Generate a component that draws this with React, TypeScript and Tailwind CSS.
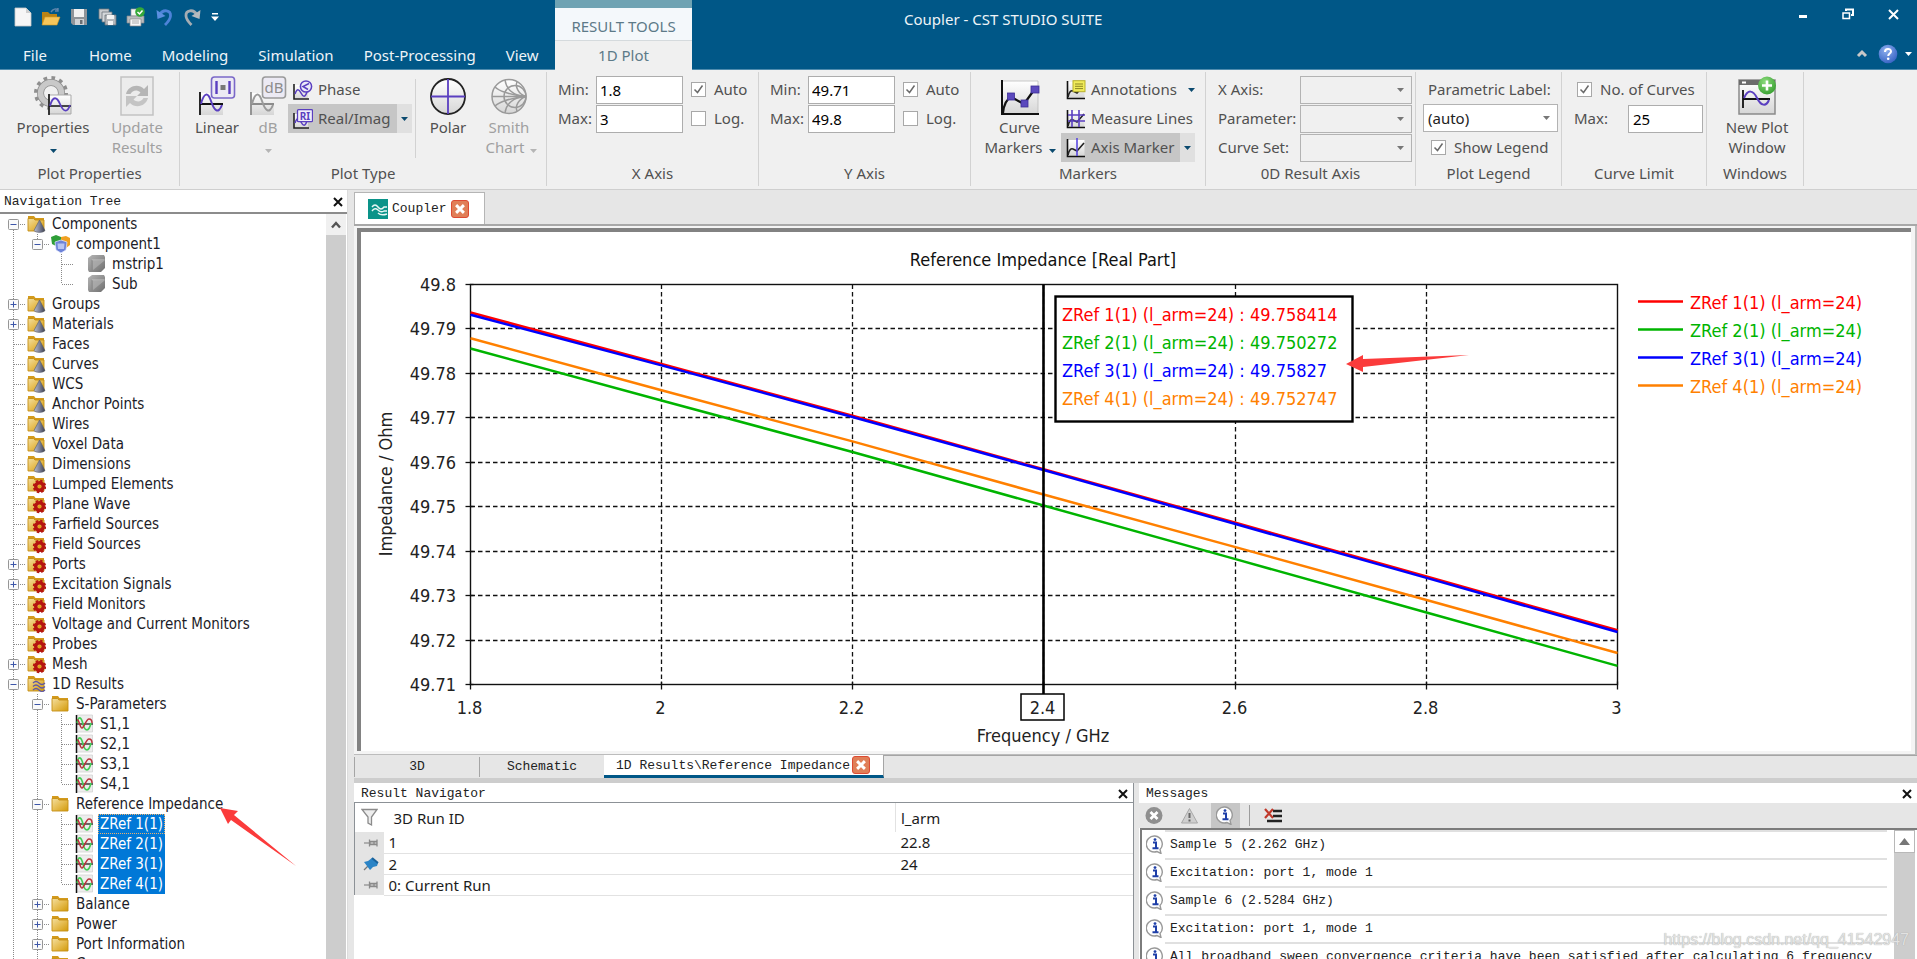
import React from "react";

/* ---------- shared pieces ---------- */

function SharedDefs() {
  return (
    <svg className="absolute h-0 w-0" aria-hidden="true">
      <defs>
        <linearGradient id="gFolder" x1="0" y1="0" x2="1" y2="1">
          <stop offset="0" stopColor="#f3dfa0" />
          <stop offset="0.5" stopColor="#e6bd52" />
          <stop offset="1" stopColor="#d29a0a" />
        </linearGradient>
        <linearGradient id="gPaper" x1="0" y1="0" x2="0" y2="1">
          <stop offset="0" stopColor="#ffffff" />
          <stop offset="1" stopColor="#d6d6d6" />
        </linearGradient>
        <linearGradient id="gCone" x1="0" y1="0" x2="1" y2="0">
          <stop offset="0" stopColor="#b9bdd0" />
          <stop offset="0.5" stopColor="#7d8298" />
          <stop offset="1" stopColor="#3c3f50" />
        </linearGradient>
        <linearGradient id="gCube" x1="0" y1="0" x2="1" y2="1">
          <stop offset="0" stopColor="#b5b5b5" />
          <stop offset="1" stopColor="#6f6f6f" />
        </linearGradient>
        <radialGradient id="gHelp" cx="0.4" cy="0.3" r="0.8">
          <stop offset="0" stopColor="#8fb0ee" />
          <stop offset="1" stopColor="#2e5cc0" />
        </radialGradient>
        <radialGradient id="gGreen" cx="0.4" cy="0.3" r="0.8">
          <stop offset="0" stopColor="#8ddb7e" />
          <stop offset="1" stopColor="#2f9a28" />
        </radialGradient>
      </defs>
    </svg>
  );
}

function Caret({ className = "text-[#0b4a6f]" }: { className?: string }) {
  return (
    <svg className={`h-[4px] w-[7px] shrink-0 ${className}`} viewBox="0 0 7 4" aria-hidden="true">
      <path d="M0 0h7L3.5 4z" fill="currentColor" />
    </svg>
  );
}

function CloseX({ label }: { label: string }) {
  return (
    <button aria-label={label} className="flex h-[14px] w-[14px] items-center justify-center">
      <svg width="10" height="10" viewBox="0 0 10 10" aria-hidden="true">
        <path d="M1 1l8 8M9 1l-8 8" stroke="#111" strokeWidth="2" />
      </svg>
    </button>
  );
}

function RedClose({ label }: { label: string }) {
  return (
    <button
      aria-label={label}
      className="flex h-[18px] w-[18px] items-center justify-center rounded-[3px] border border-[#dd4b33] bg-[#e07f58]"
    >
      <svg width="10" height="10" viewBox="0 0 9 9" aria-hidden="true">
        <path d="M1 1l7 7M8 1l-7 7" stroke="#fff" strokeWidth="2.6" />
      </svg>
    </button>
  );
}

/* ---------- title bar ---------- */

function QuickAccess() {
  return (
    <div className="flex h-[34px] items-center gap-[9px] pl-[13px]">
      <button aria-label="New">
        <svg width="19" height="20" viewBox="0 0 19 20">
          <path d="M2 1h11l5 5v13H2z" fill="#f6f6f6" stroke="#c9c9c9" strokeWidth="0.8" />
          <path d="M13 1l5 5h-5z" fill="#cfcfcf" />
        </svg>
      </button>
      <button aria-label="Open">
        <svg width="20" height="20" viewBox="0 0 20 20">
          <path d="M1 5h6l2 2h7v10H1z" fill="#b98315" />
          <path d="M4 10h15l-3 8H1z" fill="#f6c65a" stroke="#d79a1e" strokeWidth="0.6" />
          <path d="M10 5c2-3 5-4 7-2M17 1v3h-3" fill="none" stroke="#5f87ad" strokeWidth="1.4" />
        </svg>
      </button>
      <button aria-label="Save">
        <svg width="19" height="20" viewBox="0 0 19 20">
          <path d="M1 2h16v16H3l-2-2z" fill="#8f9499" />
          <path d="M4 2h10v8H4z" fill="#f2f2f2" />
          <path d="M5 12h9v6H5z" fill="#cfd2d5" />
          <path d="M10 13h2.5v4H10z" fill="#6a6f74" />
        </svg>
      </button>
      <button aria-label="Save all">
        <svg width="19" height="20" viewBox="0 0 19 20">
          <g stroke="#6d747b" strokeWidth="0.8">
            <path d="M1 2h10v10H1z" fill="#c8cbce" />
            <path d="M4 5h10v10H4z" fill="#d4d7da" />
            <path d="M7 8h11v10H7z" fill="#b3b7bb" />
          </g>
          <path d="M9 8h7v4H9zM10 14h5v4h-5z" fill="#f3f3f3" />
        </svg>
      </button>
      <button aria-label="Print">
        <svg width="20" height="20" viewBox="0 0 20 20">
          <path d="M5 2h9v7H5z" fill="#f5f5f5" stroke="#999" strokeWidth="0.7" />
          <path d="M1 9h17v7H1z" fill="#b9bcbf" stroke="#84888c" strokeWidth="0.7" />
          <path d="M4 12h11v7H4z" fill="#f7f7f7" stroke="#888" strokeWidth="0.7" />
          <path d="M6 14h7M6 16h7" stroke="#999" strokeWidth="0.8" />
          <circle cx="14" cy="5" r="4.8" fill="#35a839" />
          <path d="M11.5 5l2 2 3-3.6" fill="none" stroke="#fff" strokeWidth="1.5" />
        </svg>
      </button>
      <button aria-label="Undo">
        <svg width="19" height="20" viewBox="0 0 19 20">
          <path d="M4.500 8C8 1.500 16 3 15.500 9c-.2 3.500-2.500 6-5.500 9" fill="none" stroke="#4d83d9" strokeWidth="2.8" />
          <path d="M1.500 3l1 9 8-3z" fill="#5b8fe0" />
        </svg>
      </button>
      <button aria-label="Redo">
        <svg width="19" height="20" viewBox="0 0 19 20">
          <path d="M14 8C10.500 1.500 2.500 3 3 9c.2 3.500 2.500 6 5.500 9" fill="none" stroke="#a5adb3" strokeWidth="2.8" />
          <path d="M17.500 3l-1 9-8-3z" fill="#b4babf" />
        </svg>
      </button>
      <button aria-label="Customize quick access toolbar">
        <svg width="8" height="8" viewBox="0 0 8 8">
          <path d="M1 0h6v1.600H1zM0 3.600h8L4 8z" fill="#fff" />
        </svg>
      </button>
    </div>
  );
}

function TitleBar() {
  const tabs = ["Home", "Modeling", "Simulation", "Post-Processing", "View"];
  return (
    <header className="flex h-[70px] shrink-0 border-b border-[#4f8cae] bg-[#005787] text-[15px] text-[#eef4f8]">
      <div className="flex w-[555px] shrink-0 flex-col">
        <QuickAccess />
        <nav className="flex flex-1 items-center pl-[8px] pt-[7px]">
          <a href="#file" className="mr-[12px] px-[15px] leading-[20px]">
            File
          </a>
          {tabs.map((t) => (
            <a key={t} href={`#${t}`} className="px-[15px] leading-[20px]">
              {t}
            </a>
          ))}
        </nav>
      </div>
      <div className="flex h-[70px] w-[137px] shrink-0 flex-col border-t-[8px] border-[#6fa3b3] text-center text-[#5d7a88]">
        <div className="flex h-[33px] items-center justify-center border-b border-[#d5dadd] bg-[#f4f8fb] pt-[4px]">
          RESULT TOOLS
        </div>
        <a href="#1dplot" className="flex flex-1 items-center justify-center bg-[#f0f0f0]">
          1D Plot
        </a>
      </div>
      <div className="flex flex-1 flex-col">
        <div className="flex h-[38px] items-center justify-between pl-[212px] pr-[18px]">
          <h1>Coupler - CST STUDIO SUITE</h1>
          <div className="flex h-[14px] items-center gap-[34px] pb-[10px]">
            <button aria-label="Minimize">
              <svg width="10" height="10" viewBox="0 0 10 10">
                <path d="M1 6h8v3H1z" fill="#fff" />
              </svg>
            </button>
            <button aria-label="Restore">
              <svg width="12" height="12" viewBox="0 0 12 12" fill="none" stroke="#fff">
                <path d="M4 3V1.5h7V7H9" strokeWidth="2" />
                <path d="M1 5h6.500v5.500H1z" strokeWidth="1.500" />
              </svg>
            </button>
            <button aria-label="Close">
              <svg width="11" height="11" viewBox="0 0 11 11">
                <path d="M1 1l9 9M10 1l-9 9" stroke="#fff" strokeWidth="2" />
              </svg>
            </button>
          </div>
        </div>
        <div className="flex flex-1 items-center justify-end gap-[7px] pr-[5px]">
          <button aria-label="Collapse ribbon" className="mr-[3px]">
            <svg width="12" height="9" viewBox="0 0 12 9">
              <path d="M2 7l4-4 4 4" fill="none" stroke="#c8c8c8" strokeWidth="3" />
            </svg>
          </button>
          <button aria-label="Help">
            <svg width="20" height="20" viewBox="0 0 20 20">
              <circle cx="10" cy="10" r="9.300" fill="url(#gHelp)" />
              <path
                d="M7 8c0-4 6-4 6-.5 0 2-2.800 2-2.800 4.500"
                fill="none"
                stroke="#fff"
                strokeWidth="2"
              />
              <circle cx="10.200" cy="14.700" r="1.300" fill="#fff" />
            </svg>
          </button>
          <Caret className="text-white" />
        </div>
      </div>
    </header>
  );
}

/* ---------- ribbon icons ---------- */

function GearPlotIcon() {
  return (
    <svg width="40" height="40" viewBox="0 0 40 40" aria-hidden="true">
      <circle cx="18" cy="17" r="15" fill="none" stroke="#8f8f8f" strokeWidth="4" strokeDasharray="3.600 4.254" />
      <circle cx="18" cy="17" r="10.500" fill="none" stroke="#8f8f8f" strokeWidth="7" />
      <circle cx="18" cy="17" r="10.500" fill="none" stroke="#c9c9c9" strokeWidth="5.500" />
      <path d="M16 19h22v19H16z" fill="url(#gPaper)" stroke="#a9a9a9" />
      <path d="M16 18v21M16 30h22" stroke="#111" strokeWidth="1.600" />
      <path d="M17 30c3-11 7-9 10-2s7 10 10 1" fill="none" stroke="#5a3fc0" strokeWidth="1.800" />
    </svg>
  );
}

function UpdateIcon() {
  return (
    <svg width="36" height="40" viewBox="0 0 36 40" aria-hidden="true">
      <path d="M2 1h32v38H2z" fill="#ececec" stroke="#c2c2c2" strokeWidth="1.500" />
      <path d="M7 18c2-8 12-11 18-5l4-4v11H18l3.500-3.500c-4-3.500-8-2-10 1.500z" fill="#b5b5b5" />
      <path d="M29 22c-2 8-12 11-18 5l-4 4V20h11l-3.500 3.500c4 3.500 8 2 10-1.500z" fill="#c4c4c4" />
    </svg>
  );
}

function WaveBadgeIcon({ muted = false }: { muted?: boolean }) {
  const line = muted ? "#8c8c8c" : "#111";
  const wave = muted ? "#9a9a9a" : "#5a3fc0";
  return (
    <svg width="38" height="40" viewBox="0 0 38 40" aria-hidden="true">
      <path d="M2 17h23v22H2z" fill="url(#gPaper)" />
      <path d="M2 16v23M2 28h23" stroke={line} strokeWidth="1.800" />
      <path d="M3 28c3-12 7-12 10-3s7 14 11 4" fill="none" stroke={wave} strokeWidth="2" />
      <rect
        x="13.500"
        y="1"
        width="23"
        height="21"
        rx="3"
        fill="#eceaf4"
        stroke={muted ? "#9a9a9a" : "#7a68c8"}
        strokeWidth="1.600"
      />
      {muted ? (
        <text x="25" y="17" textAnchor="middle" fontSize="15" fill="#8c8c8c">
          dB
        </text>
      ) : (
        <g>
          <path d="M18.500 5v13M31.500 5v13" stroke="#5a3fc0" strokeWidth="2.400" />
          <path d="M22.500 9h5v5h-5z" fill="#777" />
        </g>
      )}
    </svg>
  );
}

function SmallPhaseIcon({ kind }: { kind: "phase" | "ri" }) {
  return (
    <svg width="20" height="20" viewBox="0 0 20 20" aria-hidden="true">
      <path d="M1 5h14v14H1z" fill="url(#gPaper)" />
      <path d="M1 4v15h15" fill="none" stroke="#222" strokeWidth="1.600" />
      <path d="M2 14c2-6 4-5 6-1s4 5 6-1" fill="none" stroke="#5a3fc0" strokeWidth="1.600" />
      {kind === "phase" ? (
        <g>
          <circle cx="13" cy="6.500" r="5.600" fill="#eceaf8" stroke="#5a3fc0" strokeWidth="1.500" />
          <path d="M16 3.500l-6 3 5 3" fill="none" stroke="#5a3fc0" strokeWidth="1.500" />
        </g>
      ) : (
        <g>
          <rect x="4.500" y="0.700" width="15" height="12" rx="1" fill="#f1effa" stroke="#5a3fc0" strokeWidth="1.300" />
          <text x="12" y="10.500" textAnchor="middle" fontSize="10" fontWeight="bold" fill="#5a3fc0">
            RI
          </text>
        </g>
      )}
    </svg>
  );
}

function PolarIcon() {
  return (
    <svg width="38" height="40" viewBox="0 0 38 40" aria-hidden="true">
      <ellipse cx="19" cy="20.500" rx="17" ry="17.500" fill="url(#gPaper)" stroke="#222" strokeWidth="1.800" />
      <path d="M19 3v35M2 20.500h34" stroke="#5a3fc0" strokeWidth="1.800" />
    </svg>
  );
}

function SmithIcon() {
  return (
    <svg width="38" height="40" viewBox="0 0 38 40" aria-hidden="true">
      <g fill="none" stroke="#9a9a9a" strokeWidth="1.500">
        <circle cx="19" cy="20.500" r="17" fill="url(#gPaper)" />
        <path d="M2 20.500h34" />
        <circle cx="25" cy="20.500" r="11" />
        <path d="M36 20.500C22 20 16 12 15 4M36 20.500C22 21 16 29 15 37" />
        <path d="M36 20.500C28 18 25 10 27 6M36 20.500C28 23 25 31 27 35" />
        <path d="M36 20.500C18 19 8 14 5 11M36 20.500C18 22 8 27 5 30" />
      </g>
    </svg>
  );
}

function CurveMarkersIcon() {
  return (
    <svg width="40" height="40" viewBox="0 0 40 40" aria-hidden="true">
      <path d="M2 5h36v33H2z" fill="url(#gPaper)" stroke="#bbb" strokeWidth="0.800" />
      <path d="M2 4v34h37" fill="none" stroke="#111" strokeWidth="2" />
      <path d="M3 37c1-10 4-14 8-16l13 7L34 14" fill="none" stroke="#111" strokeWidth="2.200" />
      <g fill="#5b49bd" stroke="#3d2f96" strokeWidth="0.800">
        <rect x="7.500" y="17" width="7" height="7" />
        <rect x="21" y="24" width="7" height="7" />
        <rect x="31" y="10" width="8" height="7" />
      </g>
    </svg>
  );
}

function SmallPlotIcon({ kind }: { kind: "note" | "grid" | "marker" }) {
  return (
    <svg width="20" height="20" viewBox="0 0 20 20" aria-hidden="true">
      <path d="M1.500 2h17v16h-17z" fill="url(#gPaper)" />
      <path d="M1.500 1v17.500H19" fill="none" stroke="#111" strokeWidth="1.600" />
      <path d="M2 17c1-5 3-7 5-6l4 2 7-8" fill="none" stroke="#222" strokeWidth="1.600" />
      {kind === "note" && (
        <g>
          <rect x="7" y="0.700" width="12" height="11" fill="#f1ec5a" stroke="#b7b02c" />
          <path d="M9 4h8M9 6.300h8M9 8.600h8" stroke="#8d8722" />
        </g>
      )}
      {kind === "grid" && (
        <path d="M6 1v17M13 1v17M2 6h17M2 12h17" stroke="#5a3fc0" strokeWidth="1.600" />
      )}
      {kind === "marker" && <path d="M11 0v18" stroke="#5a49e0" strokeWidth="1.600" />}
    </svg>
  );
}

function NewPlotIcon() {
  return (
    <svg width="40" height="40" viewBox="0 0 40 40" aria-hidden="true">
      <path d="M2 4h36v34H2z" fill="url(#gPaper)" stroke="#8b8b8b" strokeWidth="1.500" />
      <path d="M2 4h36v5H2z" fill="#6b6b6b" />
      <path d="M5 5.500h4v2H5z" fill="#fff" />
      <path d="M6 14v18M6 23h27" stroke="#111" strokeWidth="1.800" />
      <path d="M7 22c4-9 9-8 13 0s9 9 12 2" fill="none" stroke="#5a3fc0" strokeWidth="2" />
      <circle cx="30" cy="9.500" r="9" fill="url(#gGreen)" />
      <path d="M30 4.500v10M25 9.500h10" stroke="#fff" strokeWidth="2.600" />
    </svg>
  );
}

/* ---------- ribbon ---------- */

function Group({
  label,
  className,
  inset,
  children,
}: {
  label: string;
  className: string;
  inset: string;
  children: React.ReactNode;
}) {
  return (
    <section
      aria-label={label}
      className={`mb-[3px] mt-[2px] flex shrink-0 flex-col border-r border-[#d2d2d2] pt-[3px] ${className}`}
    >
      <div className={`flex h-[87px] ${inset}`}>{children}</div>
      <div className="text-center leading-[22px]">{label}</div>
    </section>
  );
}

function BigButton({
  icon,
  className,
  children,
}: {
  icon: React.ReactNode;
  className: string;
  children: React.ReactNode;
}) {
  return (
    <button className={`flex shrink-0 flex-col items-center text-center leading-[20px] ${className}`}>
      <span className="flex h-[42px] items-start pt-[1px]">{icon}</span>
      {children}
    </button>
  );
}

function Check({ id, label, checked = false }: { id: string; label: string; checked?: boolean }) {
  return (
    <div className="flex h-[29px] items-center">
      <span className="relative flex h-[15px] w-[15px]">
        <input
          id={id}
          type="checkbox"
          defaultChecked={checked}
          className="peer h-[15px] w-[15px] appearance-none border border-[#a8a8a8] bg-white"
        />
        <svg
          className="pointer-events-none absolute inset-0 hidden peer-checked:block"
          width="15"
          height="15"
          viewBox="0 0 15 15"
        >
          <path d="M3.500 7.500l3 3 5-7" fill="none" stroke="#6a6a6a" strokeWidth="1.500" />
        </svg>
      </span>
      <label htmlFor={id} className="pl-[8px]">
        {label}
      </label>
    </div>
  );
}

function TextField({ id, label, value }: { id: string; label: string; value: string }) {
  return (
    <div className="flex h-[29px] items-center">
      <label htmlFor={id} className="w-[38px]">
        {label}
      </label>
      <input
        id={id}
        defaultValue={value}
        className="h-[28px] w-[87px] border border-[#adadad] bg-white px-[3px] text-black"
      />
    </div>
  );
}

function AxisGroup({ axis, min, max }: { axis: "X" | "Y"; min: string; max: string }) {
  return (
    <Group label={`${axis} Axis`} className="w-[212px]" inset="pl-[11px]">
      <div className="flex flex-col">
        <TextField id={`${axis}-min`} label="Min:" value={min} />
        <TextField id={`${axis}-max`} label="Max:" value={max} />
      </div>
      <div className="ml-[8px] flex flex-col">
        <Check id={`${axis}-auto`} label="Auto" checked />
        <Check id={`${axis}-log`} label="Log." />
      </div>
    </Group>
  );
}

function SelectBox({ id, className, options }: { id: string; className: string; options: string[] }) {
  return (
    <span className={`relative flex h-[28px] items-center ${className}`}>
      <select
        id={id}
        className="h-full w-full appearance-none border border-[#b3b3b3] bg-transparent px-[4px] text-[#222]"
      >
        {options.map((o) => (
          <option key={o}>{o}</option>
        ))}
      </select>
      <span className="pointer-events-none absolute right-[8px]">
        <Caret className="text-[#777]" />
      </span>
    </span>
  );
}

function Ribbon() {
  return (
    <div className="flex h-[120px] shrink-0 border-b border-[#cfcfcf] bg-[#f0f0f0] text-[15px] text-[#515151]">
      <Group label="Plot Properties" className="w-[180px]" inset="pl-[13px]">
        <BigButton className="w-[80px]" icon={<GearPlotIcon />}>
          Properties
          <span className="pt-[12px]">
            <Caret />
          </span>
        </BigButton>
        <BigButton className="ml-[14px] w-[60px] text-[#a0a0a0]" icon={<UpdateIcon />}>
          Update Results
        </BigButton>
      </Group>

      <Group label="Plot Type" className="w-[367px]" inset="pl-[12px]">
        <BigButton className="w-[50px]" icon={<WaveBadgeIcon />}>
          Linear
        </BigButton>
        <BigButton className="ml-[7px] w-[38px] text-[#a0a0a0]" icon={<WaveBadgeIcon muted />}>
          dB
          <span className="pt-[12px]">
            <Caret className="text-[#b5b5b5]" />
          </span>
        </BigButton>
        <div className="ml-[1px] flex w-[124px] flex-col">
          <button className="flex h-[29px] items-center gap-[5px] pl-[5px]">
            <SmallPhaseIcon kind="phase" />
            Phase
          </button>
          <div className="flex h-[29px]">
            <button className="flex w-[109px] items-center gap-[5px] whitespace-nowrap bg-[#c6c6c6] pl-[5px]">
              <SmallPhaseIcon kind="ri" />
              Real/Imag
            </button>
            <button aria-label="Real/Imag options" className="flex w-[15px] items-center justify-center bg-[#e0e0e0]">
              <Caret />
            </button>
          </div>
        </div>
        <div className="ml-[3px] mt-[4px] h-[79px] w-px bg-[#d2d2d2]" />
        <BigButton className="ml-[10px] w-[44px]" icon={<PolarIcon />}>
          Polar
        </BigButton>
        <BigButton className="ml-[12px] w-[54px] text-[#a0a0a0]" icon={<SmithIcon />}>
          Smith
          <span className="flex items-center gap-[6px] pl-[5px]">
            Chart
            <span className="pt-[8px]">
              <Caret className="text-[#b5b5b5]" />
            </span>
          </span>
        </BigButton>
      </Group>

      <AxisGroup axis="X" min="1.8" max="3" />
      <AxisGroup axis="Y" min="49.71" max="49.8" />

      <Group label="Markers" className="w-[235px]" inset="pl-[12px]">
        <BigButton className="w-[74px]" icon={<CurveMarkersIcon />}>
          <span className="pr-[1px]">Curve</span>
          <span className="flex items-center gap-[6px]">
            Markers
            <span className="pt-[8px]">
              <Caret />
            </span>
          </span>
        </BigButton>
        <div className="ml-[4px] flex flex-col">
          <button className="flex h-[29px] items-center gap-[5px] pl-[5px]">
            <SmallPlotIcon kind="note" />
            <span className="w-[92px] text-left">Annotations</span>
            <Caret />
          </button>
          <button className="flex h-[29px] items-center gap-[5px] whitespace-nowrap pl-[5px]">
            <SmallPlotIcon kind="grid" />
            Measure Lines
          </button>
          <div className="flex h-[29px]">
            <button className="flex w-[119px] items-center gap-[5px] whitespace-nowrap bg-[#c6c6c6] pl-[5px]">
              <SmallPlotIcon kind="marker" />
              Axis Marker
            </button>
            <button aria-label="Axis marker options" className="flex w-[15px] items-center justify-center bg-[#e0e0e0]">
              <Caret />
            </button>
          </div>
        </div>
      </Group>

      <Group label="0D Result Axis" className="w-[210px]" inset="pl-[12px]">
        <div className="flex flex-col">
          {["X Axis:", "Parameter:", "Curve Set:"].map((l) => (
            <div key={l} className="flex h-[29px] items-center">
              <label htmlFor={l} className="w-[82px]">
                {l}
              </label>
              <SelectBox id={l} className="w-[112px]" options={[""]} />
            </div>
          ))}
        </div>
      </Group>

      <Group label="Plot Legend" className="w-[146px]" inset="pl-[7px]">
        <div className="flex flex-col">
          <label htmlFor="plabel" className="flex h-[29px] items-center whitespace-nowrap pl-[5px]">
            Parametric Label:
          </label>
          <SelectBox id="plabel" className="mb-[1px] w-[135px] bg-white" options={["(auto)"]} />
          <div className="pl-[8px]">
            <Check id="legend" label="Show Legend" checked />
          </div>
        </div>
      </Group>

      <Group label="Curve Limit" className="w-[145px]" inset="pl-[12px]">
        <div className="flex flex-col">
          <div className="pl-[3px]">
            <Check id="curves" label="No. of Curves" checked />
          </div>
          <div className="flex h-[29px] items-center">
            <label htmlFor="maxcurves" className="w-[54px]">
              Max:
            </label>
            <input
              id="maxcurves"
              defaultValue="25"
              className="h-[28px] w-[75px] border border-[#adadad] bg-white px-[4px] text-black"
            />
          </div>
        </div>
      </Group>

      <Group label="Windows" className="w-[97px]" inset="pl-[12px]">
        <BigButton className="w-[76px]" icon={<NewPlotIcon />}>
          New Plot Window
        </BigButton>
      </Group>
    </div>
  );
}

/* ---------- navigation tree ---------- */

type IconKind = "cone" | "gear" | "waves" | "folder" | "blocks" | "cube" | "curve";

type Row = { guides: string; icon: IconKind; label: string; selected?: boolean; focused?: boolean };

/* guides, one character per level:
   | line, t branch, l last branch, A first box open, M box open,
   B last box open, P box closed */
const rows: Row[] = [
  { guides: "A", icon: "cone", label: "Components" },
  { guides: "|B", icon: "blocks", label: "component1" },
  { guides: "| t", icon: "cube", label: "mstrip1" },
  { guides: "| l", icon: "cube", label: "Sub" },
  { guides: "P", icon: "cone", label: "Groups" },
  { guides: "P", icon: "cone", label: "Materials" },
  { guides: "t", icon: "cone", label: "Faces" },
  { guides: "t", icon: "cone", label: "Curves" },
  { guides: "t", icon: "cone", label: "WCS" },
  { guides: "t", icon: "cone", label: "Anchor Points" },
  { guides: "t", icon: "cone", label: "Wires" },
  { guides: "t", icon: "cone", label: "Voxel Data" },
  { guides: "t", icon: "cone", label: "Dimensions" },
  { guides: "t", icon: "gear", label: "Lumped Elements" },
  { guides: "t", icon: "gear", label: "Plane Wave" },
  { guides: "t", icon: "gear", label: "Farfield Sources" },
  { guides: "t", icon: "gear", label: "Field Sources" },
  { guides: "P", icon: "gear", label: "Ports" },
  { guides: "P", icon: "gear", label: "Excitation Signals" },
  { guides: "t", icon: "gear", label: "Field Monitors" },
  { guides: "t", icon: "gear", label: "Voltage and Current Monitors" },
  { guides: "t", icon: "gear", label: "Probes" },
  { guides: "P", icon: "gear", label: "Mesh" },
  { guides: "M", icon: "waves", label: "1D Results" },
  { guides: "|M", icon: "folder", label: "S-Parameters" },
  { guides: "||t", icon: "curve", label: "S1,1" },
  { guides: "||t", icon: "curve", label: "S2,1" },
  { guides: "||t", icon: "curve", label: "S3,1" },
  { guides: "||l", icon: "curve", label: "S4,1" },
  { guides: "|M", icon: "folder", label: "Reference Impedance" },
  { guides: "||t", icon: "curve", label: "ZRef 1(1)", selected: true, focused: true },
  { guides: "||t", icon: "curve", label: "ZRef 2(1)", selected: true },
  { guides: "||t", icon: "curve", label: "ZRef 3(1)", selected: true },
  { guides: "||l", icon: "curve", label: "ZRef 4(1)", selected: true },
  { guides: "|P", icon: "folder", label: "Balance" },
  { guides: "|P", icon: "folder", label: "Power" },
  { guides: "|P", icon: "folder", label: "Port Information" },
  { guides: "|P", icon: "folder", label: "Convergence" },
];

function Guide({ kind }: { kind: string }) {
  const up = "|tlMBP".includes(kind);
  const down = "|tAMP".includes(kind);
  const side = "tlAMBP".includes(kind);
  const box = "AMBP".includes(kind);
  return (
    <svg className="shrink-0" width="24" height="20" viewBox="0 0 24 20" aria-hidden="true">
      <g stroke="#8a8a8a" strokeDasharray="1 1">
        {up && <path d="M12.500 0v10" />}
        {down && <path d="M12.500 10v10" />}
        {side && <path d="M13 10.500h11" />}
      </g>
      {box && (
        <g>
          <rect x="7.500" y="5.500" width="10" height="10" rx="1" fill="#fafafa" stroke="#969696" />
          <path d="M9.500 10.500h6" stroke="#3d56a8" />
          {kind === "P" && <path d="M12.500 7.500v6" stroke="#3d56a8" />}
        </g>
      )}
    </svg>
  );
}

function FolderShape() {
  return (
    <g>
      <path d="M1 2h6l1.500 2H17v4H1z" fill="#d39a1c" />
      <path d="M1 4.500h5.500L8 6h9v11H1z" fill="url(#gFolder)" stroke="#c58f14" strokeWidth="0.900" />
    </g>
  );
}

function TreeIcon({ kind }: { kind: IconKind }) {
  return (
    <svg
      className={kind === "cube" ? "ml-[14px] shrink-0" : "ml-[2px] shrink-0"}
      width="19"
      height="20"
      viewBox="0 0 19 20"
      aria-hidden="true"
    >
      {(kind === "cone" || kind === "gear" || kind === "waves" || kind === "folder") && <FolderShape />}
      {kind === "cone" && (
        <path
          d="M12.500 6l5.500 10.500c-1.500 2.500-9.500 2.500-11 0z"
          fill="url(#gCone)"
          stroke="#555a6b"
          strokeWidth="0.600"
        />
      )}
      {kind === "gear" && (
        <g>
          <circle cx="12.500" cy="12.500" r="3.800" fill="none" stroke="#b5140f" strokeWidth="3.400" />
          <circle
            cx="12.500"
            cy="12.500"
            r="5.800"
            fill="none"
            stroke="#b5140f"
            strokeWidth="1.800"
            strokeDasharray="2.550 2"
          />
          <circle cx="12.500" cy="12.500" r="1.600" fill="#e0a21c" />
        </g>
      )}
      {kind === "waves" && (
        <g fill="none" stroke="#5d57a8" strokeWidth="1.200">
          <path d="M6 9q3-3 6 0t6 0" />
          <path d="M6 12.500q3-3 6 0t6 0" />
          <path d="M6 16q3-3 6 0t6 0" />
        </g>
      )}
      {kind === "blocks" && (
        <g>
          <path d="M0 3l5-2 5 2v7l-5 2-4-2z" fill="#2f9e38" />
          <path d="M10 3l5-1 4 2v7l-4 3-5-2z" fill="#f0a021" />
          <path d="M4 8l6-2 6 2-1 8-5 3-5-3z" fill="#6d83d8" stroke="#e9edff" strokeWidth="0.700" />
          <path d="M6.500 9.500h7L13 15H7z" fill="#b8c4f2" />
        </g>
      )}
      {kind === "cube" && (
        <g>
          <path d="M1 4l4-3h12l1 2v11l-4 4H2l-1-2z" fill="url(#gCube)" />
          <path d="M5 6h12.500" stroke="#c4c4c4" />
          <path d="M5 6v11" stroke="#8a8a8a" />
          <path d="M6 7h11L6 16z" fill="#b0b0b0" opacity="0.700" />
        </g>
      )}
      {kind === "curve" && (
        <g>
          <path d="M1.500 1h16v17h-16z" fill="#ededed" stroke="#cfcfcf" strokeWidth="0.700" />
          <path d="M1.500 1v18" stroke="#111" strokeWidth="1.500" />
          <path d="M2 10h16" stroke="#222" strokeWidth="1.300" />
          <path d="M2 9c1.500-7 4-7 6 1s6 8 8-1" fill="none" stroke="#44cc55" strokeWidth="1.600" />
          <path d="M2 6c2-1 3 8 5 8s4-9 7-9 3 3 3 4" fill="none" stroke="#b8323a" strokeWidth="1.500" />
        </g>
      )}
    </svg>
  );
}

function labelClass(r: Row) {
  if (r.focused)
    return "ml-[4px] bg-[#0078d7] px-[2px] text-white outline-1 -outline-offset-1 outline-dotted outline-[#e8b070]";
  if (r.selected) return "ml-[4px] bg-[#0078d7] px-[2px] text-white";
  return "ml-[4px] px-[2px]";
}

function NavigationTree() {
  return (
    <aside className="relative flex w-[348px] shrink-0 flex-col border-r border-[#dcdcdc] bg-white">
      <div className="flex h-[24px] shrink-0 items-center justify-between border-b-2 border-[#8c8c8c] pl-[4px] pr-[2px] pt-[2px]">
        <h2 className="font-['Liberation_Mono',monospace] text-[13px] leading-[18px] text-[#222]">Navigation Tree</h2>
        <CloseX label="Close navigation tree" />
      </div>
      <div className="flex min-h-0 flex-1">
        <ul className="min-w-0 flex-1 overflow-hidden pl-[1px] font-['DejaVu_Sans_Condensed','DejaVu_Sans',sans-serif] text-[15px] leading-[20px] text-[#1c1c28]">
          {rows.map((r) => (
            <li key={r.label} className="flex h-[20px] items-center whitespace-nowrap">
              {r.guides.split("").map((g, i) => (
                <Guide key={i} kind={g} />
              ))}
              <TreeIcon kind={r.icon} />
              <span className={labelClass(r)}>{r.label}</span>
            </li>
          ))}
        </ul>
        <div className="mr-[1px] flex w-[20px] flex-col bg-[#cdcdcd]">
          <button aria-label="Scroll up" className="flex h-[21px] items-center justify-center bg-[#f0f0f0]">
            <svg width="10" height="8" viewBox="0 0 10 8">
              <path d="M1 6.500l4-4.500 4 4.500" fill="none" stroke="#555" strokeWidth="2.400" />
            </svg>
          </button>
        </div>
      </div>
      <svg
        className="pointer-events-none absolute left-[219px] top-[617px]"
        width="80"
        height="60"
        viewBox="0 0 80 60"
        aria-hidden="true"
      >
        <path d="M1 1L19 4l-4 4 62 51L12 13l-3 4z" fill="#fb3b3b" />
      </svg>
    </aside>
  );
}

/* ---------- chart ---------- */

const plot = { left: 109.5, right: 1256.5, top: 52.5, bottom: 452.5 };
const px = (f: number) => Math.round(plot.left + ((f - 1.8) / 1.2) * (plot.right - plot.left) - 0.5) + 0.5;
const py = (z: number) => plot.bottom - ((z - 49.71) / 0.09) * (plot.bottom - plot.top);
const gridY = (z: number) => Math.round(py(z) - 0.5) + 0.5;

const series = [
  { name: "ZRef 1(1) (l_arm=24)", value: "49.758414", color: "#ff0000", z: [49.7937, 49.7821, 49.7705, 49.758414, 49.7464, 49.7343, 49.7222] },
  { name: "ZRef 2(1) (l_arm=24)", value: "49.750272", color: "#00b400", z: [49.7856, 49.7739, 49.7623, 49.750272, 49.7382, 49.7262, 49.7142] },
  { name: "ZRef 4(1) (l_arm=24)", value: "49.752747", color: "#ff8000", z: [49.7879, 49.7762, 49.7647, 49.752747, 49.7409, 49.729, 49.7171] },
  { name: "ZRef 3(1) (l_arm=24)", value: "49.75827", color: "#0000ff", z: [49.7932, 49.7818, 49.7702, 49.75827, 49.7461, 49.734, 49.7218] },
];
const listed = [series[0], series[1], series[3], series[2]];
const freqs = [1.8, 2, 2.2, 2.4, 2.6, 2.8, 3];
const levels = [49.8, 49.79, 49.78, 49.77, 49.76, 49.75, 49.74, 49.73, 49.72, 49.71];

function Chart() {
  return (
    <svg
      className="h-full w-full font-['DejaVu_Sans_Condensed','DejaVu_Sans',sans-serif] text-[18px]"
      viewBox="0 0 1550 519"
      role="img"
      aria-label="Reference Impedance [Real Part]"
    >
      <text x="682" y="34" textAnchor="middle" fill="#111">
        Reference Impedance [Real Part]
      </text>
      <g stroke="#111" strokeWidth="1.300" strokeDasharray="4.500 3">
        {freqs.slice(1, -1).map((f) => (
          <path key={f} d={`M${px(f)} ${plot.top}V${plot.bottom}`} />
        ))}
        {levels.slice(1, -1).map((z) => (
          <path key={z} d={`M${plot.left} ${gridY(z)}H${plot.right - 3}`} />
        ))}
      </g>
      <g stroke="#111" strokeWidth="1.300">
        {levels.map((z) => (
          <path key={z} d={`M${plot.left - 5} ${gridY(z)}h8`} />
        ))}
        {freqs.map((f) => (
          <path key={f} d={`M${px(f)} ${plot.bottom - 3}v8`} />
        ))}
      </g>
      <rect
        x={plot.left}
        y={plot.top}
        width={plot.right - plot.left}
        height={plot.bottom - plot.top}
        fill="none"
        stroke="#111"
        strokeWidth="1.400"
      />
      {series.map((s) => (
        <polyline
          key={s.name}
          points={s.z.map((z, i) => `${px(freqs[i])},${py(z)}`).join(" ")}
          fill="none"
          stroke={s.color}
          strokeWidth="2.500"
        />
      ))}
      <path d={`M${px(2.4)} ${plot.top}V${plot.bottom + 10}`} stroke="#000" strokeWidth="2.600" />
      <g fill="#222" textAnchor="end">
        {levels.map((z) => (
          <text key={z} x="95" y={gridY(z) + 6}>
            {z}
          </text>
        ))}
      </g>
      <rect x="660" y="462" width="43" height="26" fill="#fff" stroke="#000" strokeWidth="1.500" />
      <g fill="#222" textAnchor="middle">
        {freqs.map((f) => (
          <text key={f} x={px(f) - 1} y="482">
            {f}
          </text>
        ))}
        <text x="682" y="510">
          Frequency / GHz
        </text>
        <text x="0" y="0" transform="translate(31 252) rotate(-90)">
          Impedance / Ohm
        </text>
      </g>
      <rect x="694.500" y="64.500" width="297" height="125" fill="#fff" stroke="#000" strokeWidth="2.400" />
      {listed.map((s, i) => (
        <g key={s.name} fill={s.color}>
          <text x="701" y={89 + i * 28}>
            {s.name} : {s.value}
          </text>
          <path d={`M1277 ${69.5 + i * 28}h45`} stroke={s.color} strokeWidth="2.400" />
          <text x="1329" y={77 + i * 28}>
            {s.name}
          </text>
        </g>
      ))}
      <path d="M985 132l17-9v4l106-4-106 12v5z" fill="#fb3b3b" />
    </svg>
  );
}

/* ---------- lower panels ---------- */

function Pin({ active = false }: { active?: boolean }) {
  return active ? (
    <svg width="16" height="14" viewBox="0 0 16 14" aria-hidden="true">
      <path d="M1 13l4-4" stroke="#777" strokeWidth="1.200" />
      <path d="M1 5l4-1 4-3 6 5-1 3-4 1-3 3z" fill="#2b84c6" />
      <path d="M9 1l6 5" stroke="#1a639c" strokeWidth="2" />
    </svg>
  ) : (
    <svg width="16" height="10" viewBox="0 0 16 10" aria-hidden="true">
      <path d="M1 5h5" stroke="#8a8a8a" strokeWidth="1.200" />
      <path d="M6.500 1.500v7M14 1.500v7M7 3.500h7v3H7zM11 3v4" fill="#c4c4c4" stroke="#8a8a8a" strokeWidth="1.300" />
    </svg>
  );
}

function ResultNavigator() {
  const data = [
    ["1", "22.8"],
    ["2", "24"],
    ["0: Current Run", ""],
  ];
  return (
    <section className="flex w-[780px] shrink-0 flex-col border-r border-[#8c9196] bg-white">
      <div className="flex h-[20px] shrink-0 items-center justify-between border-b border-[#8c9196] pl-[7px] pr-[3px] pt-[2px]">
        <h2 className="font-['Liberation_Mono',monospace] text-[13px] leading-[18px] text-[#222]">Result Navigator</h2>
        <CloseX label="Close result navigator" />
      </div>
      <table className="w-full table-fixed border-collapse border-l border-[#8c9196] text-left text-[15px] leading-[20px] text-[#1c1c1c]">
        <colgroup>
          <col className="w-[29px]" />
          <col className="w-[512px]" />
          <col />
        </colgroup>
        <thead>
          <tr className="h-[29px]">
            <th className="pl-[6px] font-normal">
              <svg width="17" height="19" viewBox="0 0 17 19" aria-label="Filter">
                <path d="M1 1.500h15L10.500 9v8l-3.500-2V9z" fill="#ededed" stroke="#8b8b8b" strokeWidth="1.300" />
              </svg>
            </th>
            <th className="pl-[10px] font-normal">3D Run ID</th>
            <th className="border-l border-[#e2e2e2] pl-[5px] font-normal">l_arm</th>
          </tr>
        </thead>
        <tbody>
          {data.map(([id, arm]) => (
            <tr key={id} className="h-[21px]">
              <td className="bg-[#e4e4e4] pl-[8px]">
                <Pin active={id === "2"} />
              </td>
              <td className="border-b border-[#e2e2e2] pl-[5px]">{id}</td>
              <td className="border-b border-[#e2e2e2] pl-[5px]">{arm}</td>
            </tr>
          ))}
        </tbody>
      </table>
    </section>
  );
}

function InfoIcon() {
  return (
    <svg className="shrink-0" width="19" height="19" viewBox="0 0 19 19" aria-hidden="true">
      <path d="M9 1a8 8 0 1 0 2 15.500l4 2-1-4A8 8 0 0 0 9 1z" fill="#fff" stroke="#999" strokeWidth="1.400" />
      <path d="M7 7.500h3v5.500M6.500 13.300h6" fill="none" stroke="#1f3fa8" strokeWidth="2" />
      <circle cx="9" cy="4.600" r="1.400" fill="#1f3fa8" />
    </svg>
  );
}

function Messages() {
  const messages = [
    "Sample 5 (2.262 GHz)",
    "Excitation: port 1, mode 1",
    "Sample 6 (2.5284 GHz)",
    "Excitation: port 1, mode 1",
    "All broadband sweep convergence criteria have been satisfied after calculating 6 frequency",
  ];
  return (
    <section className="relative ml-[5px] flex min-w-0 flex-1 flex-col bg-white font-['Liberation_Mono',monospace] text-[13px] text-[#222]">
      <div className="flex h-[20px] shrink-0 items-center justify-between pl-[7px] pr-[3px] pt-[2px]">
        <h2 className="leading-[18px]">Messages</h2>
        <CloseX label="Close messages" />
      </div>
      <div className="flex h-[25px] shrink-0 items-center bg-[#e6e6e6] pl-[6px]">
        <button aria-label="Errors" className="w-[35px]">
          <svg width="19" height="19" viewBox="0 0 19 19">
            <circle cx="9" cy="9.500" r="8.500" fill="#8f8f8f" />
            <path d="M5.500 6l7 7M12.500 6l-7 7" stroke="#fff" strokeWidth="2.800" />
          </svg>
        </button>
        <button aria-label="Warnings" className="w-[31px]">
          <svg width="19" height="18" viewBox="0 0 19 18">
            <path d="M9.500 1.500L17.500 16H1.500z" fill="#cfcfcf" stroke="#a8a8a8" />
            <path d="M9.500 6v5M9.500 12.500v2" stroke="#666" strokeWidth="2" />
          </svg>
        </button>
        <button aria-label="Information" className="flex h-[25px] w-[29px] items-center justify-center bg-[#c6c6c6]">
          <InfoIcon />
        </button>
        <div className="ml-[9px] h-[21px] w-px bg-[#9c9c9c]" />
        <button aria-label="Clear messages" className="ml-[14px]">
          <svg width="18" height="16" viewBox="0 0 18 16">
            <path d="M9 3h9M9 8h9M3 13h15" stroke="#222" strokeWidth="2.400" />
            <path d="M1 1l8 9M9 1l-8 9" stroke="#c0392b" strokeWidth="2.200" />
          </svg>
        </button>
      </div>
      <div className="ml-[1px] flex min-h-0 flex-1 border-l-2 border-t-2 border-[#7c7c7c]">
        <ul className="min-w-0 flex-1 overflow-hidden pl-[4px] pr-[7px]">
          {messages.map((m, i) => (
            <li key={i} className="flex h-[28px] items-center">
              <InfoIcon />
              <span className="flex h-[28px] min-w-0 flex-1 items-center whitespace-nowrap border-t-2 border-[#e0e0e0] pb-[1px] pl-[5px]">
                {m}
              </span>
            </li>
          ))}
        </ul>
        <div className="mr-[2px] flex w-[21px] shrink-0 flex-col bg-[#cdcdcd]">
          <button
            aria-label="Scroll up"
            className="flex h-[23px] items-center justify-center border border-[#b8b8b8] bg-white"
          >
            <svg width="11" height="7" viewBox="0 0 11 7">
              <path d="M5.500 0L11 7H0z" fill="#777" />
            </svg>
          </button>
        </div>
      </div>
      <span className="pointer-events-none absolute bottom-[9px] right-[8px] font-['Liberation_Sans',sans-serif] text-[16px] leading-[20px] text-[#e2e2e2] [text-shadow:0_0_1px_#9a9a9a]">
        https://blog.csdn.net/qq_41542947
      </span>
    </section>
  );
}

/* ---------- work area ---------- */

function DocumentTabs() {
  return (
    <div className="flex h-[36px] shrink-0 border-b-2 border-[#a8a8a8] pt-[2px]">
      <div className="flex w-[131px] items-center border border-b-0 border-[#b5b5b5] bg-white pl-[13px] font-['Liberation_Mono',monospace] text-[13px]">
        <svg width="20" height="20" viewBox="0 0 20 20" aria-hidden="true">
          <path d="M0 0h20v20H0z" fill="#0a9389" />
          <path
            d="M4 8q3-4 6 0t6 0h3M4 12q3-4 6-1t6 1h3M10 14q3 3 9 1"
            fill="none"
            stroke="#e8f7f5"
            strokeWidth="1.400"
          />
        </svg>
        <a href="#coupler" className="ml-[4px] mr-[4px] text-[#222]">
          Coupler
        </a>
        <RedClose label="Close Coupler" />
      </div>
    </div>
  );
}

function ViewTabs() {
  return (
    <nav className="flex h-[23px] shrink-0 font-['Liberation_Mono',monospace] text-[13px] text-[#222]">
      <a href="#3d" className="mb-[1px] mt-[2px] flex w-[125px] items-center justify-center border-l border-[#a5a5a5]">
        3D
      </a>
      <a
        href="#schematic"
        className="mb-[1px] mt-[2px] flex w-[125px] items-center justify-center border-l border-[#a5a5a5]"
      >
        Schematic
      </a>
      <div className="flex items-center whitespace-nowrap border-b-[3px] border-r border-b-[#005787] border-r-[#a5a5a5] bg-white pl-[12px] pr-[13px]">
        <a href="#1d" className="mr-[2px] pt-[2px]">
          1D Results\Reference Impedance
        </a>
        <RedClose label="Close 1D Results" />
      </div>
      <div className="flex-1 border-t border-[#a5a5a5]" />
    </nav>
  );
}

export default function App() {
  return (
    <div className="flex h-screen flex-col overflow-hidden bg-[#e6e6e6] font-['Noto_Sans','Open_Sans',sans-serif]">
      <SharedDefs />
      <TitleBar />
      <Ribbon />
      <div className="flex min-h-0 flex-1">
        <NavigationTree />
        <main className="ml-[6px] flex min-w-0 flex-1 flex-col">
          <DocumentTabs />
          <div className="flex min-h-0 flex-1 border-b border-r-2 border-[#bcbcbc] bg-[#f4f4f4] pb-[3px] pl-[3px] pr-[4px] pt-[2px]">
            <div className="min-w-0 flex-1 border-l-4 border-t-4 border-[#828282] bg-white">
              <Chart />
            </div>
          </div>
          <ViewTabs />
          <div className="flex h-[181px] shrink-0 border-t-[5px] border-[#cdcdcd]">
            <ResultNavigator />
            <Messages />
          </div>
        </main>
      </div>
    </div>
  );
}
